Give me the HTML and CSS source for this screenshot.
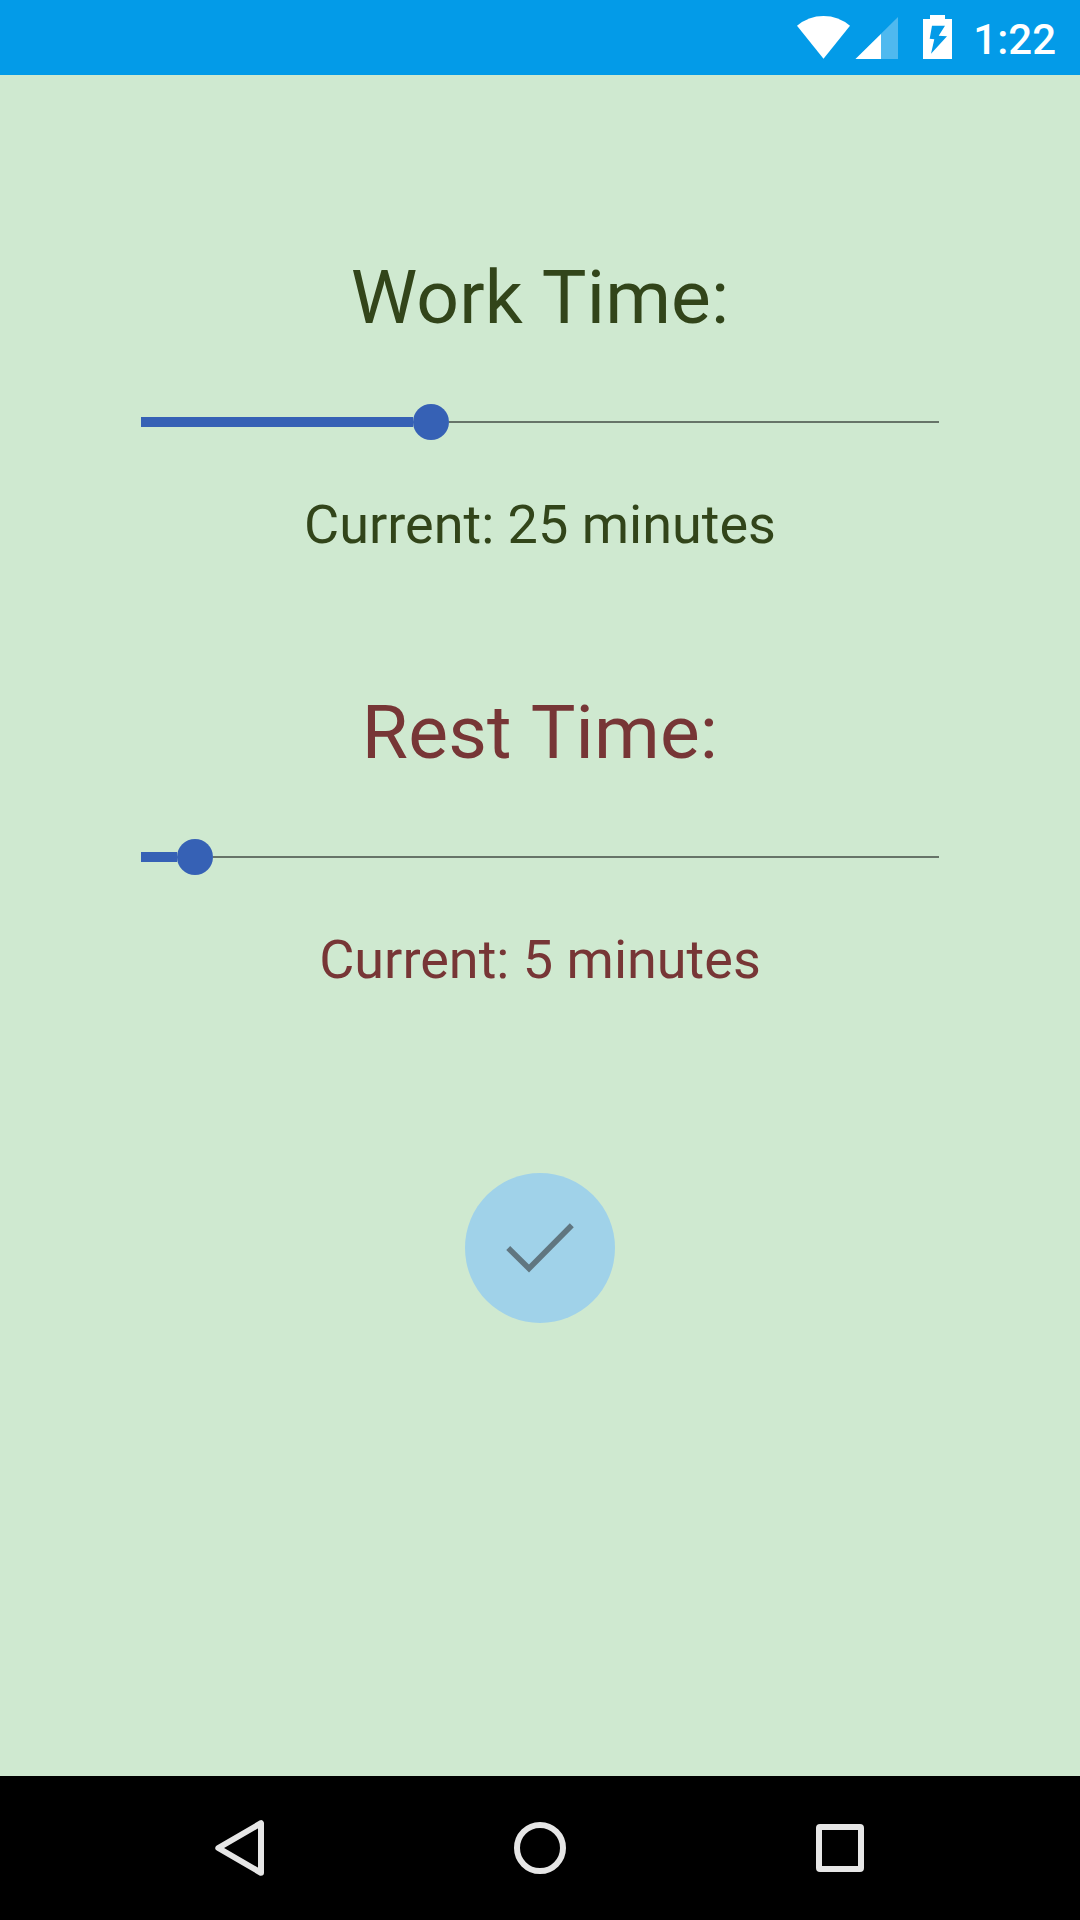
FILE: index.html
```html
<!DOCTYPE html>
<html lang="en">
<head>
<meta charset="utf-8">
<title>Timer settings</title>
<link rel="stylesheet" href="styles.css">
</head>
<body>
<div class="screen">
  <header class="status-bar">
    <svg class="status-icons" width="160" height="75" viewBox="795 0 160 75" aria-hidden="true">
      <path d="M797 25.8Q808.500 16 823.500 16T850 25.800L823.500 58.800Z" fill="#fff"/>
      <path d="M898 17V59H855.500Z" fill="#fff" fill-opacity=".3"/>
      <path d="M881 34V59H855.500Z" fill="#fff"/>
      <path fill-rule="evenodd" d="M930 15H945V19H952V59H923V19H930ZM932 25.700L929.700 38.700L934.300 39.300L931 53.700L947 36.300L938.700 35.700L945 25.700Z" fill="#fff"/>
    </svg>
    <span class="clock">1:22</span>
  </header>

  <main class="content">
    <section class="setting work">
      <h1 class="title">Work Time:</h1>
      <div class="slider">
        <div class="fill" style="width: 272px"></div>
        <div class="thumb"></div>
        <div class="track"></div>
      </div>
      <p class="value">Current: 25 minutes</p>
    </section>
    <section class="setting rest">
      <h1 class="title">Rest Time:</h1>
      <div class="slider">
        <div class="fill" style="width: 36px"></div>
        <div class="thumb"></div>
        <div class="track"></div>
      </div>
      <p class="value">Current: 5 minutes</p>
    </section>
    <button class="confirm" aria-label="Confirm">
      <svg width="150" height="150" viewBox="465 1173 150 150">
        <path d="M508.200 1248L529 1268.500L571.800 1225.300" fill="none" stroke="#607680" stroke-width="5.600"/>
      </svg>
    </button>
  </main>

  <nav class="nav-bar">
    <svg width="60" height="60" viewBox="0 0 60 60"><path d="M8.300 30L51 5.200V54.800Z" class="glyph"/></svg>
    <svg width="60" height="60" viewBox="0 0 60 60"><circle cx="30" cy="30" r="23" class="glyph"/></svg>
    <svg width="60" height="60" viewBox="0 0 60 60"><rect x="9" y="9" width="42" height="42" rx="1" class="glyph"/></svg>
  </nav>
</div>
</body>
</html>
```
FILE: styles.css
```css
* {
  box-sizing: border-box;
}

body {
  margin: 0;
  font-family: Roboto, sans-serif;
}

.screen {
  display: flex;
  flex-direction: column;
  width: 1080px;
  height: 1920px;
  background: #cfe9d0;
}

.status-bar {
  display: flex;
  align-items: center;
  justify-content: flex-end;
  gap: 18px;
  height: 75px;
  padding-right: 24px;
  background: #039be8;
}

.status-icons {
  display: block;
}

.clock {
  padding-top: 3px;
  color: #fff;
  font-size: 42px;
  font-weight: 500;
  line-height: 49px;
}

.content {
  flex: 1;
  display: flex;
  flex-direction: column;
  align-items: center;
  padding-top: 178px;
}

.setting {
  display: flex;
  flex-direction: column;
  align-items: center;
  width: 798px;
  height: 435px;
}

.work {
  color: #32451a;
}

.rest {
  color: #773636;
}

.title {
  margin: 0;
  font-size: 75px;
  font-weight: 400;
  letter-spacing: 0.15px;
  word-spacing: 1.7px;
  line-height: 88px;
}

.slider {
  display: flex;
  align-items: center;
  width: 100%;
  height: 36px;
  margin: 63px 0 53px;
}

.fill {
  height: 10px;
  background: #3661b5;
}

.thumb {
  width: 36px;
  height: 36px;
  border-radius: 50%;
  background: #3661b5;
}

.track {
  flex: 1;
  height: 2px;
  background: #677468;
}

.value {
  margin: 0;
  font-size: 54px;
  line-height: 63px;
}

.confirm {
  width: 150px;
  height: 150px;
  margin-top: 50px;
  padding: 0;
  border: 0;
  border-radius: 50%;
  background: #a0d2e9;
}

.confirm svg {
  display: block;
}

.nav-bar {
  display: flex;
  align-items: center;
  justify-content: center;
  gap: 240px;
  height: 144px;
  background: #000;
}

.glyph {
  fill: none;
  stroke: #e6e6e6;
  stroke-width: 6;
  stroke-linejoin: round;
}
```
